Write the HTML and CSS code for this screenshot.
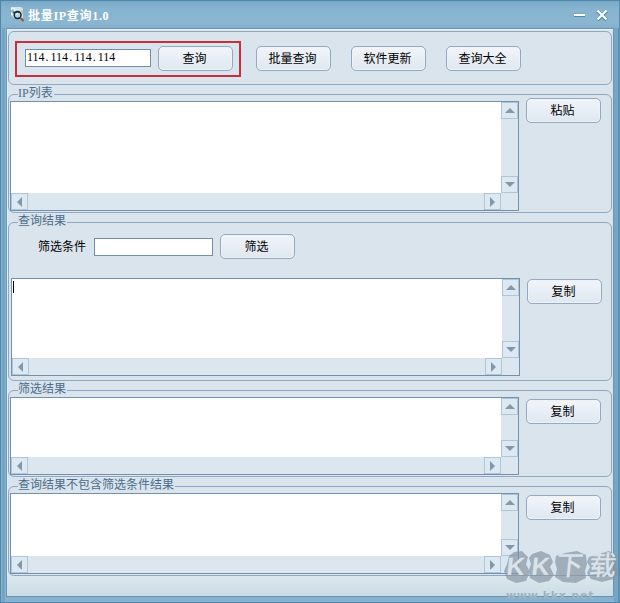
FILE: index.html
```html
<!DOCTYPE html>
<html lang="zh-CN">
<head>
<meta charset="utf-8">
<title>批量IP查询1.0</title>
<link rel="stylesheet" href="styles.css">
</head>
<body>
<div class="window">
  <header class="titlebar">
    <svg class="app-icon" width="15" height="15" viewBox="0 0 15 15">
      <path d="M1 0h10l2 2v9H4L1 8z" fill="#cfe5f2"/>
      <path d="M1 1h4v3H1zM1 6h3v2H1z" fill="#f4fafd"/>
      <path d="M0 4h3M3 2v5" stroke="#6f9cbc"/>
      <circle cx="7.6" cy="8" r="3.4" fill="#b9d5e5" stroke="#172532" stroke-width="1.5"/>
      <path d="M3 5.2h6" stroke="#172532"/>
      <path d="M6 7.5l2-1.5" stroke="#fff"/>
      <path d="M10.5 11l3 3" stroke="#8a5a36" stroke-width="2"/>
      <path d="M12 3v4" stroke="#d89a53"/>
    </svg>
    <h1 class="title">批量IP查询1.0</h1>
    <svg class="controls" width="36" height="14" viewBox="0 0 36 14">
      <path d="M1 7.3h11" stroke="#477c9f" stroke-width="3"/>
      <path d="M24.5 3l9 9M33.5 3l-9 9" stroke="#477c9f" stroke-width="3.4"/>
      <path d="M1 7h11" stroke="#fff" stroke-width="2"/>
      <path d="M24.5 2.5l9 9M33.5 2.5l-9 9" stroke="#fff" stroke-width="2.2"/>
    </svg>
  </header>
  <main class="content">
    <section class="panel toolbar">
      <div class="query">
        <div class="field ip">114<span class="dot">.</span>114<span class="dot">.</span>114<span class="dot">.</span>114</div>
        <button class="btn">查询</button>
      </div>
      <button class="btn">批量查询</button>
      <button class="btn">软件更新</button>
      <button class="btn">查询大全</button>
    </section>

    <section class="panel group list">
      <h2 class="legend">IP列表</h2>
      <div class="row">
        <div class="area"><div class="text"></div><div class="vbar"><i class="arrow up"></i><i class="arrow down"></i></div><div class="hbar"><i class="arrow left"></i><i class="arrow right"></i></div></div>
        <button class="btn side">粘贴</button>
      </div>
    </section>

    <section class="panel group results">
      <h2 class="legend">查询结果</h2>
      <div class="filter">
        <span class="label">筛选条件</span>
        <div class="field condition"></div>
        <button class="btn">筛选</button>
      </div>
      <div class="row">
        <div class="area"><div class="text"><div class="caret"></div></div><div class="vbar"><i class="arrow up"></i><i class="arrow down"></i></div><div class="hbar"><i class="arrow left"></i><i class="arrow right"></i></div></div>
        <button class="btn side">复制</button>
      </div>
    </section>

    <section class="panel group filtered">
      <h2 class="legend">筛选结果</h2>
      <div class="row">
        <div class="area"><div class="text"></div><div class="vbar"><i class="arrow up"></i><i class="arrow down"></i></div><div class="hbar"><i class="arrow left"></i><i class="arrow right"></i></div></div>
        <button class="btn side">复制</button>
      </div>
    </section>

    <section class="panel group excluded">
      <h2 class="legend">查询结果不包含筛选条件结果</h2>
      <div class="row">
        <div class="area"><div class="text"></div><div class="vbar"><i class="arrow up"></i><i class="arrow down"></i></div><div class="hbar"><i class="arrow left"></i><i class="arrow right"></i></div></div>
        <button class="btn side">复制</button>
      </div>
    </section>
    <footer class="status"></footer>
  </main>
  <div class="watermark">
    <svg class="blobs" width="117" height="34" viewBox="0 0 117 34">
      <path d="M6 6l5-4 8-1 6 6-2 7 4 8-4 9-10 2-9-4-3-8 3-7zM29 4l9-3 9 4 3 7-3 5 4 8-5 6-10 2-9-5-1-8 2-6-2-6zM53 6l9-3 12-2 9 4 1 9-2 7 1 7-10 5-13-1-8-5 2-8-2-7zM86 7l10-3 10-3 8 4-1 9 3 8-5 7-12 3-11-3-4-6 3-6-3-5z"/>
    </svg>
    <div class="brand"><span>K</span><span>K</span><span class="han">下</span><span class="han">载</span></div>
    <div class="site">www.kkx.net</div>
  </div>
</div>
</body>
</html>
```
FILE: styles.css
```css
* { box-sizing: border-box; }
body {
  margin: 0;
  font: 12px/14px "Liberation Serif", "Noto Sans CJK SC", serif;
  color: #000;
}
.window {
  position: relative;
  width: 620px;
  height: 603px;
  padding: 0 6px 6px;
  overflow: hidden;
  background: linear-gradient(90deg, #5086aa 0 1px, #88b4d0 1px 2px, #75a3c2 2px 5px, #8bb7d1 5px 6px, #86b2ce 6px 614px, #76a5c5 614px 618px, #5b90b2 618px);
  border-top: 1px solid #4e86a9;
  border-bottom: 1px solid #5086aa;
}
.titlebar {
  display: flex;
  align-items: center;
  height: 27px;
  margin: 0 -5px;
  padding: 0 10px 0 9px;
  background: linear-gradient(#77a8c7, #86b3cf 25%, #8ab6d1 80%, #83afcb);
}
.title {
  margin: 2px 0 0 3px;
  font-size: 12px;
  line-height: 14px;
  font-weight: bold;
  letter-spacing: .7px;
  color: #fff;
}
.controls { margin-left: auto; }
.content {
  height: 569px;
  padding: 2px 1px 0;
  border: 1px solid #6795b5;
  background: #dae4ec;
  box-shadow: inset 0 1px #e9f1f6, inset 1px 0 #e9f1f6;
}
.panel { border: 1px solid #91a7c2; border-radius: 6px; }
.toolbar {
  display: flex;
  align-items: flex-start;
  height: 54px;
  padding: 9px 0 0 6px;
}
.toolbar > .btn { margin: 5px 20px 0 0; }
.query {
  display: flex;
  align-items: flex-start;
  width: 226px;
  height: 36px;
  margin-right: 15px;
  padding: 3px 6px 0 8px;
  border: 2px solid #c82f3d;
}
.field { height: 18px; border: 1px solid #738fa8; background: #fff; }
.ip { width: 126px; margin: 3px 7px 0 0; padding: 0 1px; line-height: 15px; }
.dot { padding: 0 2px 0 1px; }
.btn {
  flex: none;
  width: 75px;
  height: 25px;
  padding: 1px 2px 0 0;
  border: 1px solid #95a8c1;
  border-radius: 5px;
  background: linear-gradient(#f1f5fa, #e8eef5 50%, #dfe7ef);
  box-shadow: inset 0 0 0 1px #edf2f7;
  font: inherit;
}
.group { position: relative; padding: 6px 0 0 1px; }
.legend {
  position: absolute;
  top: -10px;
  left: 9px;
  margin: 0;
  padding: 0 1px 0 0;
  font-size: 12px;
  font-weight: normal;
  line-height: 16px;
  color: #4a6d8a;
  background: #dae4ec;
}
.row { display: flex; align-items: flex-start; }
.area {
  display: grid;
  grid-template: 1fr 17px / 1fr 17px;
  width: 509px;
  height: 110px;
  border: 1px solid #7590aa;
  background: #dce6ee;
}
.text { background: #fff; }
.caret { width: 1px; height: 12px; margin: 2px 0 0 1px; background: #000; }
.vbar, .hbar { display: flex; justify-content: space-between; }
.vbar { flex-direction: column; }
.arrow {
  display: flex;
  align-items: center;
  justify-content: center;
  width: 17px;
  height: 17px;
  border: 1px solid #b0c5d5;
  background: #dce9f2;
}
.arrow::before { content: ""; border: 5px solid transparent; }
.up::before { border-width: 0 5px 5px; border-bottom-color: #8397aa; }
.down::before { border-width: 5px 5px 0; border-top-color: #8397aa; }
.left::before { border-width: 5px 5px 5px 0; border-right-color: #8397aa; }
.right::before { border-width: 5px 0 5px 5px; border-left-color: #8397aa; }
.side { margin: -3px 0 0 7px; }
.list { height: 119px; margin-top: 9px; }
.results { height: 159px; margin-top: 9px; padding: 11px 0 0 2px; }
.results .area { height: 98px; }
.results .side { margin-top: 1px; }
.filter { display: flex; height: 44px; padding-left: 27px; }
.label { width: 56px; padding-top: 6px; }
.condition { width: 119px; margin: 4px 7px 0 0; }
.filtered { height: 87px; margin-top: 9px; }
.filtered .area { height: 78px; }
.filtered .side, .excluded .side { margin-top: 2px; }
.excluded { height: 90px; margin-top: 9px; }
.excluded .area { height: 81px; }
.status {
  height: 20px;
  margin: 0 -1px;
  background: linear-gradient(#dce7ed, #cbdce5);
}
.watermark {
  position: absolute;
  left: 503px;
  top: 549px;
  width: 117px;
  height: 54px;
}
.blobs { position: absolute; left: 0; top: 0; fill: #8495a3; opacity: .68; }
.brand {
  position: relative;
  display: flex;
  height: 38px;
  font: bold 25px/33px "Liberation Sans", "Noto Sans CJK SC", sans-serif;
  color: #d9e2e9;
}
.brand span { width: 25px; text-align: center; transform: skewX(-6deg); }
.brand .han { width: 33px; font-size: 27px; font-weight: 500; }
.site {
  position: relative;
  padding-left: 3px;
  font: bold 11px/16px "DejaVu Sans", sans-serif;
  letter-spacing: .7px;
  color: #9fb3c1;
}
```
